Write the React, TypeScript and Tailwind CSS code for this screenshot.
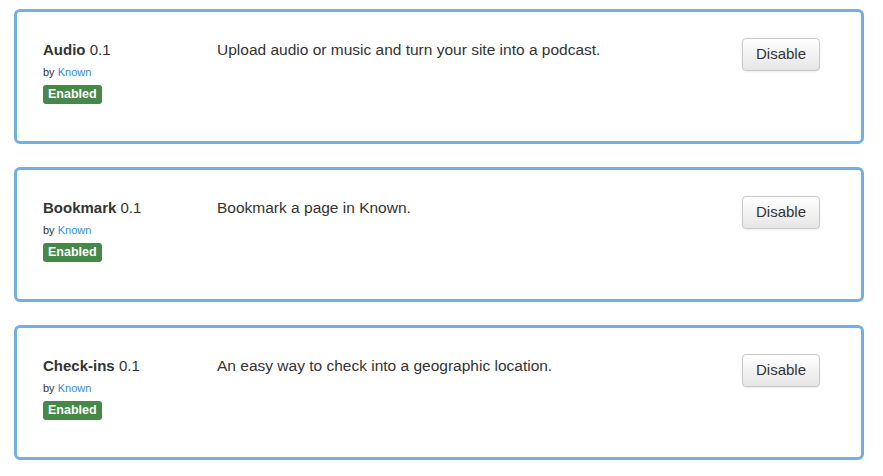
const PLUGINS = [
  { name: "Audio", version: "0.1", description: "Upload audio or music and turn your site into a podcast." },
  { name: "Bookmark", version: "0.1", description: "Bookmark a page in Known." },
  { name: "Check-ins", version: "0.1", description: "An easy way to check into a geographic location." },
];

export default function App() {
  return (
    <div className="min-h-screen bg-white pt-[9px] pl-[14px] font-['Liberation_Sans',Arial,sans-serif] text-[#333]">
      <div className="flex w-[850px] flex-col gap-[23px]">
        {PLUGINS.map((plugin) => (
          <div
            key={plugin.name}
            className="flex h-[135px] items-start rounded-[6px] border-[3px] border-[#72afe2] pl-[26px] pr-[41px] pt-[26px]"
          >
            {/* Name + author */}
            <div className="mt-[2px] w-[174px] shrink-0">
              <div className="text-[15px] leading-[20px]">
                <span className="font-bold">{plugin.name}</span> {plugin.version}
              </div>
              <div className="mt-[4px] text-[11px] leading-[16px]">
                by <a href="#" className="text-[#3a8bd0]">Known</a>
              </div>
              <span className="mt-[5px] inline-block rounded-[3px] bg-[#468847] px-[5px] text-[12.5px] font-bold leading-[19px] text-white">
                Enabled
              </span>
            </div>

            {/* Description */}
            <p className="mt-[2px] flex-1 text-[15.5px] leading-[20px]">{plugin.description}</p>

            {/* Action */}
            <button className="h-[33px] w-[78px] rounded-[4px] border border-[#c8c8c8] bg-gradient-to-b from-white to-[#e6e6e6] text-[15px] text-[#333] shadow-[0_1px_2px_rgba(0,0,0,0.08)]">
              Disable
            </button>
          </div>
        ))}
      </div>
    </div>
  );
}
